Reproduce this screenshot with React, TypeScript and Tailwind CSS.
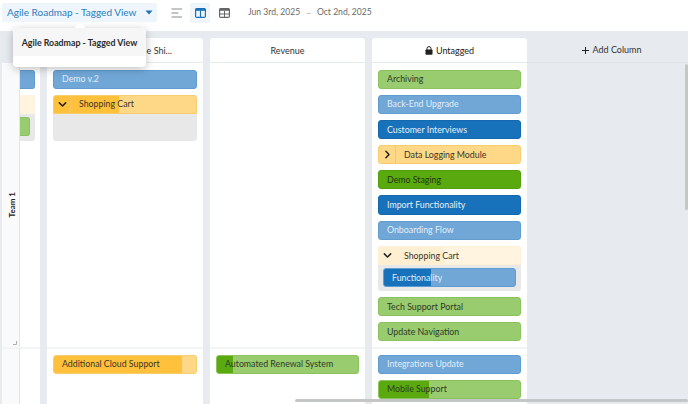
import React from "react";

type Tone = "green" | "blue" | "navy" | "yellow" | "pale" | "lime" | "orange";
const tones: Record<Tone, { bg: string; border: string; text: string }> = {
  green: { bg: "bg-[#99cb6f]", border: "border-[#8bc25e]", text: "text-[#2f3a26]" },
  blue: { bg: "bg-[#70a7d7]", border: "border-[#5f9ccf]", text: "text-[#e2edf7]" },
  navy: { bg: "bg-[#1772bb]", border: "border-[#1269ae]", text: "text-[#e6f0f8]" },
  yellow: { bg: "bg-[#fed886]", border: "border-[#f8cd70]", text: "text-[#3a3526]" },
  pale: { bg: "bg-[#fff4df]", border: "border-[#fff0d5]", text: "text-[#3a3526]" },
  lime: { bg: "bg-[#59a90f]", border: "border-[#52a00c]", text: "text-[#22350f]" },
  orange: { bg: "bg-[#ffc13b]", border: "border-[#f8bb38]", text: "text-[#3a3526]" },
};
const fills: Record<string, string> = {
  orange: "bg-[#ffc13b]",
  lime: "bg-[#59a90f]",
  navy: "bg-[#1772bb]",
  paleDark: "bg-[#ffefd2]",
};

function Card({ label, tone, fill, fillColor, toggle, className = "" }: {
  label: string; tone: Tone; fill?: number; fillColor?: string; toggle?: "down" | "right"; className?: string;
}) {
  const t = tones[tone];
  return (
    <div className={`relative flex h-[19.2px] shrink-0 items-center overflow-hidden rounded-[3px] border ${t.bg} ${t.border} ${t.text} ${className}`}>
      {fill !== undefined && fillColor && (
        <div className={`absolute inset-y-0 left-0 ${fills[fillColor]}`} style={{ width: fill }} />
      )}
      {toggle && (
        <div className={`relative flex h-full w-[17px] shrink-0 items-center justify-center border-r ${tone === "pale" ? "border-[#ffefd2]" : "border-[#f6c75f]"}`}>
          <svg width="9" height="9" viewBox="0 0 10 10" fill="none" stroke="#1d1d1d" strokeWidth="1.6" strokeLinecap="round" strokeLinejoin="round">
            {toggle === "down" ? <path d="M1.5 3.2 5 6.7l3.5-3.5" /> : <path d="M3.2 1.5 6.7 5 3.2 8.5" />}
          </svg>
        </div>
      )}
      <span className="relative whitespace-nowrap pl-[8px] pt-[1px] text-[8.8px] leading-none">{label}</span>
    </div>
  );
}

function Group({ label, fill, fillColor, tone, children, toggle = "down", bodyClass = "h-[27px]" }: {
  label: string; tone: Tone; fill: number; fillColor: string; toggle?: "down"; children?: React.ReactNode; bodyClass?: string;
}) {
  return (
    <div className="shrink-0 overflow-hidden rounded-[3px] bg-[#e8e8e8]">
      <Card label={label} tone={tone} fill={fill} fillColor={fillColor} toggle={toggle} className="rounded-b-none" />
      <div className={`px-[5px] pt-[3px] ${bodyClass}`}>{children}</div>
    </div>
  );
}

function Column({ header, top, bottom, width = "w-[156px]" }: {
  header: React.ReactNode; top?: React.ReactNode; bottom?: React.ReactNode; width?: string;
}) {
  return (
    <div className={`flex shrink-0 flex-col rounded-t-[3px] bg-white ${width}`}>
      <div className="flex h-[25px] shrink-0 items-center justify-center border-b border-[#e7eaee] pt-[1px] text-[9px] text-[#333]">{header}</div>
      <div className="flex h-[284px] shrink-0 flex-col gap-[6px] px-[6px] pt-[6.5px]">{top}</div>
      <div className="flex flex-1 flex-col gap-[6px] border-t-2 border-[#f3f4f6] px-[6px] pt-[5.5px]">{bottom}</div>
    </div>
  );
}

export default function App() {
  return (
    <div className="relative h-[404px] w-[688px] overflow-hidden bg-white font-['Lato','Liberation_Sans',sans-serif]">
      <header className="flex h-[31px] items-start pl-[2px] pt-[3px]">
        <div className="flex h-[19px] w-[155px] items-center justify-between rounded-[2px] bg-[#eef6fc] pl-[5px] pr-[4px] text-[10px] text-[#2a7cbc]">
          <span className="whitespace-nowrap">Agile Roadmap - Tagged View</span>
          <svg width="8" height="5" viewBox="0 0 8 5"><path d="M0.5 0.5h7L4 4.5z" fill="#1b72b8" /></svg>
        </div>
        <div className="ml-[10px] flex h-[19px] w-[20px] items-center justify-center">
          <svg width="12" height="10" viewBox="0 0 12 10" fill="none" stroke="#8a8a8a" strokeWidth="1">
            <path d="M0.5 1h10.5M0.5 5h7M0.5 9h10.5" />
          </svg>
        </div>
        <div className="ml-[3px] flex h-[20px] w-[20px] items-center justify-center rounded-[2px] bg-[#eef6fc]">
          <svg width="11" height="10" viewBox="0 0 11 10"><rect x="0.6" y="0.6" width="9.8" height="8.8" rx="1.2" fill="none" stroke="#1b72b8" strokeWidth="1.2" /><rect x="0.6" y="0.6" width="9.8" height="2.2" fill="#1b72b8" /><path d="M5.5 1v8" stroke="#1b72b8" strokeWidth="1.2" /></svg>
        </div>
        <div className="ml-[4px] flex h-[19px] w-[20px] items-center justify-center">
          <svg width="11" height="10" viewBox="0 0 11 10"><rect x="0.6" y="0.6" width="9.8" height="8.8" rx="1.2" fill="none" stroke="#666" strokeWidth="1.2" /><rect x="0.6" y="0.6" width="9.8" height="2.2" fill="#666" /><path d="M5.5 3v6M1 6h9" stroke="#666" strokeWidth="1" /></svg>
        </div>
        <div className="ml-[14px] flex h-[19px] items-center whitespace-nowrap text-[8.6px] text-[#6a6a6a]">
          <span>Jun 3rd, 2025</span>
          <span className="mx-[6px] text-[6px]">—</span>
          <span>Oct 2nd, 2025</span>
        </div>
      </header>

      <main className="flex h-[373px] bg-[#e7eaee] pl-[2px] pt-[7px]">
        <div className="flex w-[18px] shrink-0 flex-col self-stretch">
          <div className="h-[25px] shrink-0" />
          <div className="relative flex h-[284px] shrink-0 items-center justify-center border-r border-[#e2e5e9] bg-[#fafafa] pl-[3px]">
            <span className="rotate-180 text-[8px] font-bold text-[#222] [writing-mode:vertical-rl]">Team 1</span>
            <svg className="absolute bottom-[2px] right-[2px]" width="4" height="4" viewBox="0 0 4 4"><path d="M3.5 0v3.5H0" fill="none" stroke="#999" strokeWidth="0.8" /></svg>
          </div>
          <div className="flex-1 border-r border-t-2 border-[#e2e5e9] border-t-[#f3f4f6] bg-[#fafafa]" />
        </div>

        <div className="flex w-[20px] shrink-0 flex-col self-stretch">
          <div className="h-[25px] shrink-0" />
          <div className="flex h-[284px] shrink-0 flex-col items-end gap-[6px] overflow-hidden bg-white pr-[5px] pt-[6.5px]">
            <div className="h-[19px] w-[20px] shrink-0 rounded-r-[3px] border border-l-0 border-[#5f9ccf] bg-[#70a7d7]" />
            <div className="w-[20px] shrink-0 overflow-hidden rounded-r-[3px] bg-[#e8e8e8]">
              <div className="h-[19px] bg-[#fff4df]" />
              <div className="h-[27px] pr-[5px] pt-[3px]">
                <div className="h-[19px] rounded-r-[3px] border border-l-0 border-[#8bc25e] bg-[#99cb6f]" />
              </div>
            </div>
          </div>
          <div className="flex-1 border-t-2 border-[#f3f4f6] bg-white" />
        </div>

        <div className="ml-[7px] flex gap-[7px]">
          <Column
            header={<span className="w-full pr-[31px] text-right">e Shi...</span>}
            top={<>
              <Card label="Demo v.2" tone="blue" />
              <Group label="Shopping Cart" tone="yellow" fill={65} fillColor="orange" />
            </>}
            bottom={<Card label="Additional Cloud Support" tone="yellow" fill={128} fillColor="orange" />}
          />
          <Column
            width="w-[155px]"
            header="Revenue"
            bottom={<Card label="Automated Renewal System" tone="green" fill={16} fillColor="lime" />}
          />
          <Column
            width="w-[155px]"
            header={<span className="flex items-center gap-[3px] text-[#222]">
              <svg width="8" height="9" viewBox="0 0 8 9"><path d="M2 4V2.6a2 2 0 0 1 4 0V4" fill="none" stroke="#222" strokeWidth="1" /><rect x="0.5" y="3.6" width="7" height="5.2" rx="0.7" fill="#222" /></svg>
              Untagged
            </span>}
            top={<>
              <Card label="Archiving" tone="green" />
              <Card label="Back-End Upgrade" tone="blue" />
              <Card label="Customer Interviews" tone="navy" />
              <Card label="Data Logging Module" tone="yellow" toggle="right" />
              <Card label="Demo Staging" tone="lime" />
              <Card label="Import Functionality" tone="navy" />
              <Card label="Onboarding Flow" tone="blue" />
              <Group label="Shopping Cart" tone="pale" fill={65} fillColor="paleDark" bodyClass="h-[26px]">
                <Card label="Functionality" tone="blue" fill={47} fillColor="navy" />
              </Group>
              <Card label="Tech Support Portal" tone="green" />
              <Card label="Update Navigation" tone="green" />
            </>}
            bottom={<>
              <Card label="Integrations Update" tone="blue" />
              <Card label="Mobile Support" tone="green" fill={50} fillColor="lime" />
            </>}
          />
          <div className="-ml-[7px] flex w-[168px] shrink-0 flex-col">
            <div className="flex h-[25px] shrink-0 items-center justify-center gap-[3px] border-b border-[#dfe2e6] text-[9px] text-[#333]">
              <svg width="9" height="9" viewBox="0 0 9 9"><path d="M4.5 1v7M1 4.5h7" stroke="#222" strokeWidth="1" /></svg>
              Add Column
            </div>
          </div>
        </div>
      </main>

      <div className="absolute right-0 top-[64px] h-[146px] w-[3px] rounded-full bg-[#c4c6c8]" />
      <div className="absolute bottom-[2px] right-0 h-[3px] w-[393px] rounded-full bg-[#c4c6c8]" />

      <div className="absolute left-[13px] top-[28px] w-[133px] rounded-[4px] bg-white shadow-[0_2px_8px_rgba(0,0,0,0.25)]">
        <div className="absolute -top-[4px] left-[63px] h-[8px] w-[8px] rotate-45 bg-white" />
        <div className="relative flex h-[28px] items-center justify-center rounded-t-[4px] bg-[#f6f6f6] pt-[1px] text-[8.8px] font-bold text-[#2b2b2b]">Agile Roadmap - Tagged View</div>
        <div className="h-[11px]" />
      </div>
    </div>
  );
}
